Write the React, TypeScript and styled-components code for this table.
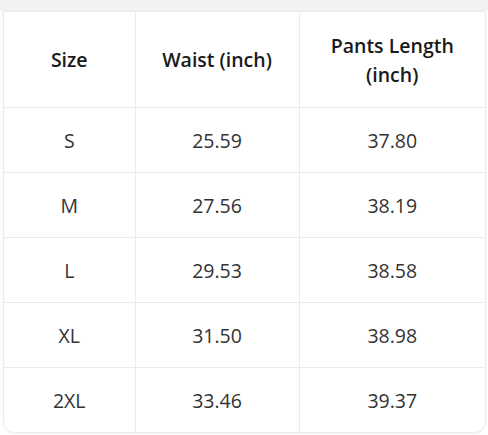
import * as React from 'react'
import styled, { createGlobalStyle } from 'styled-components'

const GlobalStyle = createGlobalStyle`
  body {
    margin: 0;
    background: #ffffff;
    font-family: 'Open Sans', 'Liberation Sans', sans-serif;
  }
`

const rows = [
  ['S', '25.59', '37.80'],
  ['M', '27.56', '38.19'],
  ['L', '29.53', '38.58'],
  ['XL', '31.50', '38.98'],
  ['2XL', '33.46', '39.37'],
]

const Page = styled.div`
  width: 488px;
  height: 435px;
  background: #ffffff;
`

const TopStrip = styled.div`
  height: 11px;
  background: #f1f2f4;
`

const Card = styled.div`
  margin: 0 2px 0 3px;
  border: 1px solid #ebebeb;
  border-radius: 0 0 12px 12px;
  overflow: hidden;
  box-shadow: 0 1px 3px rgba(0, 0, 0, 0.06);
`

const Table = styled.table`
  width: 100%;
  border-collapse: collapse;
  table-layout: fixed;
`

const Head = styled.th`
  height: 95px;
  padding: 0 24px;
  font-size: 19.5px;
  font-weight: 600;
  line-height: 29px;
  color: #1a1a1a;
  text-align: center;
  border-left: 1px solid #ebebeb;
  &:first-child {
    border-left: none;
  }
`

const Cell = styled.td`
  height: 64px;
  padding: 0;
  font-size: 19.5px;
  color: #333333;
  text-align: center;
  border-left: 1px solid #ebebeb;
  border-top: 1px solid #ebebeb;
  &:first-child {
    border-left: none;
  }
`

export default function App() {
  return (
    <Page>
      <GlobalStyle />
      <TopStrip />
      <Card>
        <Table>
          <colgroup>
            <col style={{ width: 131 }} />
            <col style={{ width: 164 }} />
            <col />
          </colgroup>
          <thead>
            <tr>
              <Head>Size</Head>
              <Head>Waist (inch)</Head>
              <Head>Pants Length (inch)</Head>
            </tr>
          </thead>
          <tbody>
            {rows.map((r) => (
              <tr key={r[0]}>
                {r.map((v, i) => (
                  <Cell key={i}>{v}</Cell>
                ))}
              </tr>
            ))}
          </tbody>
        </Table>
      </Card>
    </Page>
  )
}
